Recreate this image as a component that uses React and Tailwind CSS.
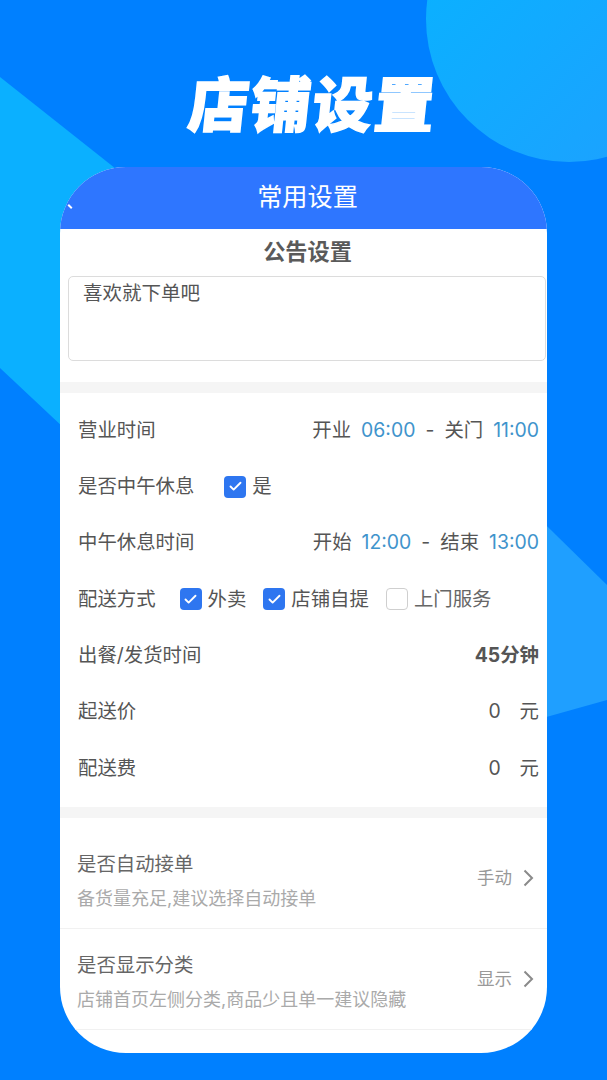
import { Check } from 'lucide-react';

const font = { fontFamily: 'Inter, "Noto Sans CJK SC", sans-serif' };

function Box({ checked }) {
  if (!checked) {
    return <span className="w-[22px] h-[22px] rounded-[4px] border border-[#cfcfcf] bg-white shrink-0" />;
  }
  return (
    <span className="w-[22px] h-[22px] rounded-[4px] bg-[#2e76f0] shrink-0 flex items-center justify-center">
      <Check size={15} strokeWidth={3} className="text-white" />
    </span>
  );
}

function Row({ label, children }) {
  return (
    <div className="h-[56.3px] flex items-center justify-between pl-[18px] pr-[8px]">
      <span className="shrink-0">{label}</span>
      {children}
    </div>
  );
}

function TimeRange({ a, from, b, to }) {
  return (
    <span className="flex items-center gap-[10px]">
      <span>{a}</span>
      <span className="text-[#3f94cc]">{from}</span>
      <span className="w-[9px] text-center">-</span>
      <span>{b}</span>
      <span className="text-[#3f94cc]">{to}</span>
    </span>
  );
}

function Option({ label, checked }) {
  return (
    <span className="flex items-center gap-[6px]">
      <Box checked={checked} />
      <span className={checked ? '' : 'text-[#666]'}>{label}</span>
    </span>
  );
}

function Amount() {
  return (
    <span className="flex items-center gap-[19px]">
      <span>0</span>
      <span>元</span>
    </span>
  );
}

function LinkRow({ title, desc, value }) {
  return (
    <div className="h-[101px] flex items-center justify-between pl-[17px] pr-[13px] border-b border-[#f1f1f1]">
      <div className="flex flex-col gap-[10px] pt-[5px]">
        <span className="text-[19.4px] leading-[26px] text-[#666]">{title}</span>
        <span className="text-[18px] leading-[24px] text-[#aaa]">{desc}</span>
      </div>
      <div className="flex items-center gap-[11px] text-[#999] text-[17.5px]">
        <span>{value}</span>
        <svg width="11" height="18" viewBox="0 0 11 18" fill="none" stroke="#8a8a8a" strokeWidth="2">
          <path d="M1.5 1.5 L9 9 L1.5 16.5" />
        </svg>
      </div>
    </div>
  );
}

export default function App() {
  return (
    <div className="relative w-[607px] h-[1080px] overflow-hidden bg-[#0080ff]" style={font}>
      {/* background shapes */}
      <svg className="absolute inset-0" width="607" height="1080" viewBox="0 0 607 1080">
        <defs>
          <linearGradient id="circleFill" x1="0" y1="0" x2="1" y2="1">
            <stop offset="0.2" stopColor="#0bb0ff" />
            <stop offset="1" stopColor="#1f9fff" />
          </linearGradient>
        </defs>
        <circle cx="569" cy="19" r="143" fill="url(#circleFill)" />
        <polygon points="0,77 130,180 130,490 0,368" fill="#0bb0ff" />
        <polygon points="500,480 607,585 607,700 500,730" fill="#1f9fff" />
      </svg>

      <div className="relative flex flex-col items-center">
        <h1
          className="h-[167px] ml-[22px] pt-[62px] text-[60px] leading-[78px] tracking-[2px] font-black text-white -skew-x-[6deg]"
          style={{ fontFamily: '"Noto Sans CJK SC", sans-serif', WebkitTextStroke: '1.5px white' }}
        >
          店铺设置
        </h1>

        <div className="w-[487px] h-[886px] rounded-[66px] overflow-hidden bg-white text-[19.4px] text-[#555]">
          <div className="relative h-[62px] bg-[#2e76ff] flex items-center justify-center pl-[8px] text-white text-[25.2px]">
            常用设置
            <span className="absolute left-[9px] top-[37px] w-[2px] h-[5px] -rotate-45 bg-white" />
          </div>

          <div className="text-center pl-[8px] font-bold text-[22.2px] leading-[46px] h-[47px] text-[#5a5a5a]">公告设置</div>
          <div className="ml-[8px] mr-[1px] h-[85px] rounded-[5px] border border-[#dcdcdc] px-[14px] pt-[3px] text-[19.5px] leading-[27px]">
            喜欢就下单吧
          </div>
          <div className="h-[11px] mt-[21px] bg-[#f5f5f5]" />

          <div className="pt-[9.3px]">
            <Row label="营业时间">
              <TimeRange a="开业" from="06:00" b="关门" to="11:00" />
            </Row>
            <Row label="是否中午休息">
              <span className="flex-1 ml-[30px] flex">
                <Option label="是" checked />
              </span>
            </Row>
            <Row label="中午休息时间">
              <TimeRange a="开始" from="12:00" b="结束" to="13:00" />
            </Row>
            <Row label="配送方式">
              <span className="flex-1 ml-[24px] flex gap-[17px]">
                <Option label="外卖" checked />
                <Option label="店铺自提" checked />
                <Option label="上门服务" />
              </span>
            </Row>
            <Row label="出餐/发货时间">
              <span className="font-bold">45分钟</span>
            </Row>
            <Row label="起送价">
              <Amount />
            </Row>
            <Row label="配送费">
              <Amount />
            </Row>
          </div>

          <div className="h-[11px] mt-[11px] bg-[#f5f5f5]" />

          <div className="pt-[10px]">
            <LinkRow title="是否自动接单" desc="备货量充足,建议选择自动接单" value="手动" />
            <LinkRow title="是否显示分类" desc="店铺首页左侧分类,商品少且单一建议隐藏" value="显示" />
          </div>
        </div>
      </div>
    </div>
  );
}
